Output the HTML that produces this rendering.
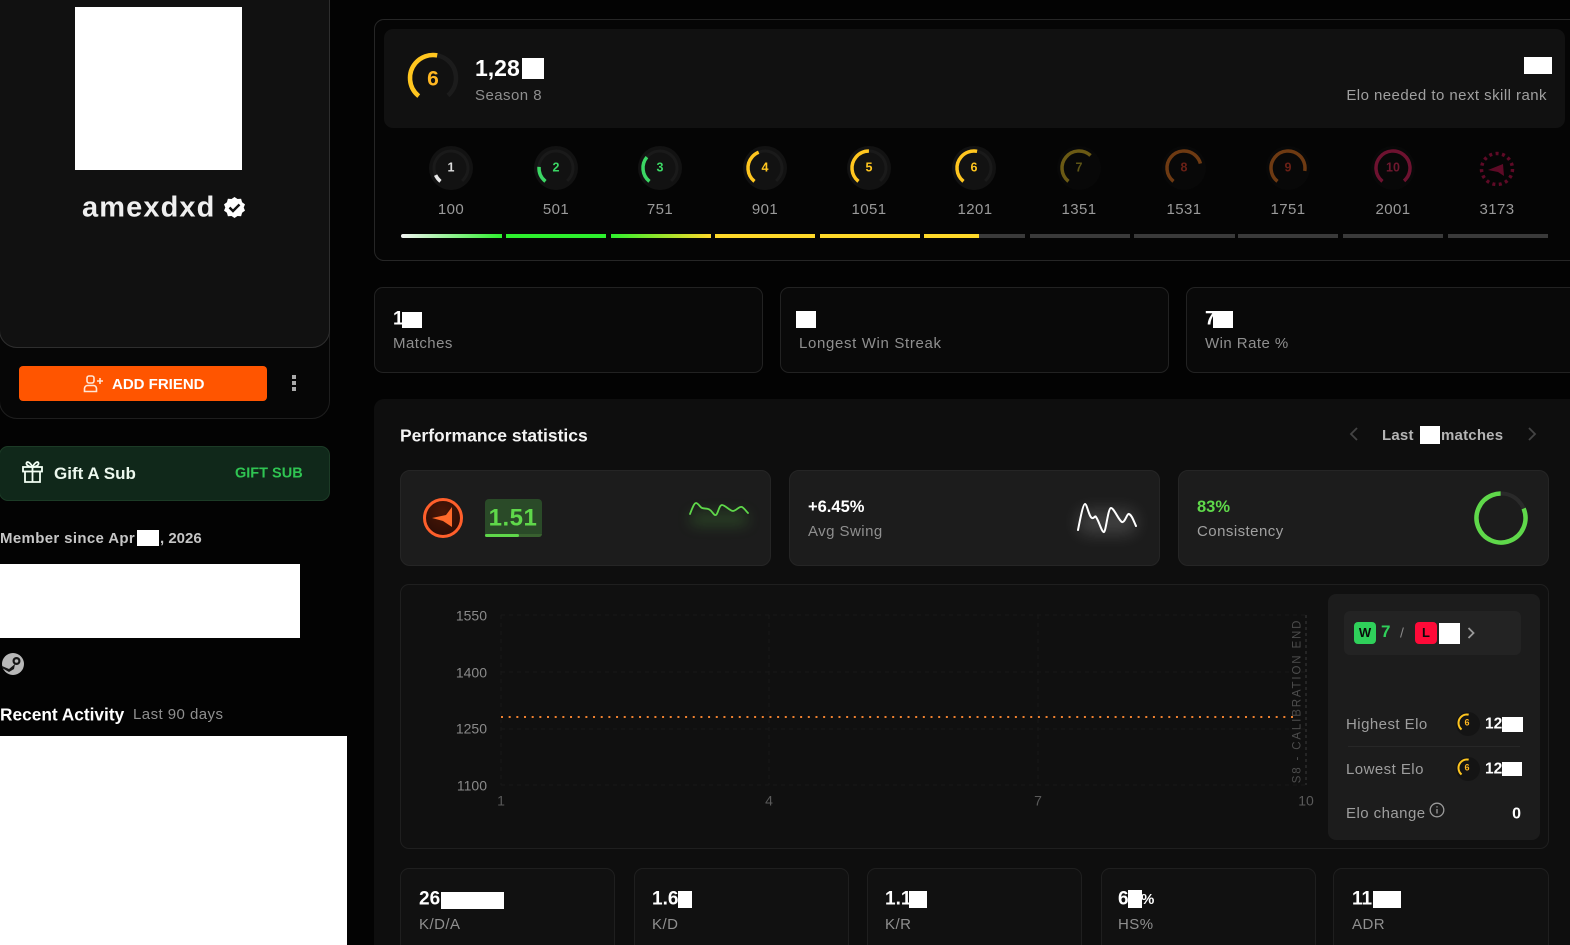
<!DOCTYPE html>
<html lang="en">
<head>
<meta charset="utf-8">
<title>amexdxd</title>
<style>
html,body{margin:0;padding:0;background:#030303;width:1570px;height:945px;overflow:hidden}
body{position:relative;font-family:"Liberation Sans",sans-serif;color:#fff}
div,svg,span{box-sizing:border-box}
.a{position:absolute}
.t{position:absolute;white-space:nowrap;transform:translateY(-50%);line-height:1.2;margin-top:2px}
.c{transform:translate(-50%,-50%);text-align:center}
.w{position:absolute;background:#fff}
.lbl{font-size:15px;color:#8f8f8f;letter-spacing:.45px}
.val{font-size:19px;font-weight:700;color:#fff;margin-top:1px}
.g{position:absolute;width:44px;height:44px;overflow:visible}
.num{font-size:15px;color:#9a9a9a;letter-spacing:.4px;margin-top:1px}
.bar{position:absolute;top:234px;height:4px;width:100px;background:#3a3a3a}
.gn{font-size:12.500px;font-weight:700;margin-top:0}
.stat{position:absolute;top:287px;height:86px;background:#090909;border:1px solid #222;border-radius:9px}
.card{position:absolute;top:470px;height:96px;width:371px;background:#1c1c1c;border:1px solid #252525;border-radius:10px}
.bot{position:absolute;top:868px;height:90px;width:215px;background:#111;border:1px solid #1f1f1f;border-radius:9px}
.ax{font-size:14px;color:#8a8a8a;margin-top:1px}
.axx{font-size:14px;color:#5a5a5a;margin-top:1px}
</style>
</head>
<body>

<!-- LEFT COLUMN -->
<div class="a" style="left:-1px;top:-20px;width:331px;height:439px;border:1px solid #1e1e1e;border-radius:0 0 18px 18px;background:#060606"></div>
<div class="a" style="left:-1px;top:-20px;width:331px;height:368px;background:#111;border:1px solid #2e2e2e;border-radius:0 0 18px 18px"></div>
<div class="w" style="left:75px;top:7px;width:167px;height:163px"></div>
<div class="t" style="left:82px;top:208px;margin-top:0;font-size:29px;font-weight:700;color:#efefef;letter-spacing:1.100px">amexdxd</div>
<svg class="a" style="left:224px;top:197px" width="21" height="21" viewBox="0 0 21 21"><path d="M10.5 0l3 2 3.600-.2 1 3.400 2.900 2.200-1.300 3.100 1.300 3.100-2.900 2.200-1 3.400-3.600-.2-3 2-3-2-3.600.2-1-3.400L0 13.600l1.300-3.100L0 7.400l2.900-2.200 1-3.400L7.500 2z" fill="#fff"/><path d="M5.500 10.500l3.500 3.500 6.500-6.500" fill="none" stroke="#111" stroke-width="2.400"/></svg>

<div class="a" style="left:19px;top:366px;width:248px;height:35px;background:#ff5500;border-radius:4px"></div>
<svg class="a" style="left:83px;top:375px" width="21" height="18" viewBox="0 0 21 18" fill="none" stroke="#ffe6d6" stroke-width="1.600"><rect x="4" y="1" width="7" height="7" rx="2"/><path d="M1.500 16.500v-3a3 3 0 0 1 3-3h6a3 3 0 0 1 3 3v3z"/><path d="M14 6h6M17 3v6"/></svg>
<div class="t" style="left:112px;top:383px;font-size:15px;font-weight:700;color:#fff">ADD FRIEND</div>
<div class="a" style="left:292px;top:375px;width:4px;height:4px;background:#aaa"></div>
<div class="a" style="left:292px;top:381px;width:4px;height:4px;background:#aaa"></div>
<div class="a" style="left:292px;top:387px;width:4px;height:4px;background:#aaa"></div>

<div class="a" style="left:-1px;top:446px;width:331px;height:55px;background:#10281a;border:1px solid #1c3b26;border-radius:9px"></div>
<svg class="a" style="left:22px;top:461px" width="21" height="22" viewBox="0 0 21 22" fill="none" stroke="#f2fff4" stroke-width="1.800"><rect x="1" y="6" width="19" height="4.500"/><path d="M3 10.500V21h15V10.500M10.500 6v15M10.500 6C8 1 5 0 4.500 2S7 6 10.500 6zM10.500 6c2.500-5 5.500-6 6-4s-2.500 4-6 4z"/></svg>
<div class="t" style="left:54px;top:472px;font-size:17px;font-weight:700;color:#ecf8ee">Gift A Sub</div>
<div class="t" style="left:235px;top:472px;font-size:14.500px;font-weight:700;color:#2fc452">GIFT SUB</div>

<div class="t" style="left:0;top:537px;font-size:15px;font-weight:700;color:#c6c6c6;letter-spacing:.35px">Member since Apr</div>
<div class="w" style="left:137px;top:530px;width:22px;height:16px"></div>
<div class="t" style="left:160px;top:537px;font-size:15px;font-weight:700;color:#c6c6c6">, 2026</div>
<div class="w" style="left:0;top:564px;width:300px;height:74px"></div>

<svg class="a" style="left:2px;top:653px" width="22" height="22" viewBox="0 0 22 22"><circle cx="11" cy="11" r="11" fill="#b8b8b8"/><circle cx="14.500" cy="8" r="4" fill="#161616"/><circle cx="14.500" cy="8" r="1.800" fill="#b8b8b8"/><path d="M0 13l7 3 6-5-1 5-5 3-7-4z" fill="#161616"/></svg>

<div class="t" style="left:0;top:713px;font-size:17.300px;font-weight:700;color:#fff">Recent Activity</div>
<div class="t lbl" style="left:133px;top:713px">Last 90 days</div>
<div class="w" style="left:0;top:736px;width:347px;height:209px"></div>

<!-- TOP CARD -->
<div class="a" style="left:374px;top:19px;width:1210px;height:242px;background:#050505;border:1px solid #262626;border-radius:10px"></div>
<div class="a" style="left:384px;top:29px;width:1181px;height:99px;background:#111;border-radius:9px"></div>

<svg class="a" style="left:406px;top:51px" width="54" height="54" viewBox="0 0 54 54" fill="none"><circle cx="27" cy="27" r="23" stroke="#1c1c1c" stroke-width="4.500" pathLength="100" stroke-dasharray="78 22" transform="rotate(130 27 27)"/><circle cx="27" cy="27" r="23" stroke="#ffc61f" stroke-width="4.500" pathLength="100" stroke-dasharray="42 58" transform="rotate(130 27 27)"/></svg>
<div class="t c" style="left:433px;top:79px;margin-top:0;font-size:21px;font-weight:700;color:#ffb722">6</div>
<div class="t" style="left:475px;top:68px;margin-top:1px;font-size:23px;font-weight:700;color:#fff">1,28</div>
<div class="w" style="left:522px;top:58px;width:22px;height:21px"></div>
<div class="t lbl" style="left:475px;top:94px">Season 8</div>
<div class="w" style="left:1524px;top:57px;width:28px;height:17px"></div>
<div class="t lbl" style="right:23px;top:94px;color:#a0a0a0">Elo needed to next skill rank</div>

<!-- Gauges -->
<svg class="g" style="left:429px;top:146px" viewBox="0 0 44 44" fill="none"><circle cx="22" cy="22" r="22" fill="#121212"/><circle cx="22" cy="22" r="17" stroke="#1a1a1a" stroke-width="3" pathLength="100" stroke-dasharray="78 22" transform="rotate(130 22 22)"/><circle cx="22" cy="22" r="17" stroke="#e8e8e8" stroke-width="3.500" pathLength="100" stroke-dasharray="7 93" transform="rotate(130 22 22)"/></svg>
<div class="t c gn" style="left:451px;top:168px;color:#ddd">1</div>
<svg class="g" style="left:534px;top:146px" viewBox="0 0 44 44" fill="none"><circle cx="22" cy="22" r="22" fill="#121212"/><circle cx="22" cy="22" r="17" stroke="#1a1a1a" stroke-width="3" pathLength="100" stroke-dasharray="78 22" transform="rotate(130 22 22)"/><circle cx="22" cy="22" r="17" stroke="#3bd764" stroke-width="3.500" pathLength="100" stroke-dasharray="15 85" transform="rotate(130 22 22)"/></svg>
<div class="t c gn" style="left:556px;top:168px;color:#3bd764">2</div>
<svg class="g" style="left:638px;top:146px" viewBox="0 0 44 44" fill="none"><circle cx="22" cy="22" r="22" fill="#121212"/><circle cx="22" cy="22" r="17" stroke="#1a1a1a" stroke-width="3" pathLength="100" stroke-dasharray="78 22" transform="rotate(130 22 22)"/><circle cx="22" cy="22" r="17" stroke="#3bd764" stroke-width="3.500" pathLength="100" stroke-dasharray="25 75" transform="rotate(130 22 22)"/></svg>
<div class="t c gn" style="left:660px;top:168px;color:#3bd764">3</div>
<svg class="g" style="left:743px;top:146px" viewBox="0 0 44 44" fill="none"><circle cx="22" cy="22" r="22" fill="#121212"/><circle cx="22" cy="22" r="17" stroke="#1a1a1a" stroke-width="3" pathLength="100" stroke-dasharray="78 22" transform="rotate(130 22 22)"/><circle cx="22" cy="22" r="17" stroke="#ffc61f" stroke-width="3.500" pathLength="100" stroke-dasharray="33 67" transform="rotate(130 22 22)"/></svg>
<div class="t c gn" style="left:765px;top:168px;color:#ffc61f">4</div>
<svg class="g" style="left:847px;top:146px" viewBox="0 0 44 44" fill="none"><circle cx="22" cy="22" r="22" fill="#121212"/><circle cx="22" cy="22" r="17" stroke="#1a1a1a" stroke-width="3" pathLength="100" stroke-dasharray="78 22" transform="rotate(130 22 22)"/><circle cx="22" cy="22" r="17" stroke="#ffc61f" stroke-width="3.500" pathLength="100" stroke-dasharray="39 61" transform="rotate(130 22 22)"/></svg>
<div class="t c gn" style="left:869px;top:168px;color:#ffc61f">5</div>
<svg class="g" style="left:952px;top:146px" viewBox="0 0 44 44" fill="none"><circle cx="22" cy="22" r="22" fill="#121212"/><circle cx="22" cy="22" r="17" stroke="#1a1a1a" stroke-width="3" pathLength="100" stroke-dasharray="78 22" transform="rotate(130 22 22)"/><circle cx="22" cy="22" r="17" stroke="#ffc61f" stroke-width="3.500" pathLength="100" stroke-dasharray="42 58" transform="rotate(130 22 22)"/></svg>
<div class="t c gn" style="left:974px;top:168px;color:#ffc61f">6</div>
<svg class="g" style="left:1057px;top:146px" viewBox="0 0 44 44" fill="none"><circle cx="22" cy="22" r="22" fill="#080808"/><circle cx="22" cy="22" r="17" stroke="#6b5a14" stroke-width="3.500" pathLength="100" stroke-dasharray="51 49" transform="rotate(130 22 22)"/></svg>
<div class="t c gn" style="left:1079px;top:168px;color:#5d5416">7</div>
<svg class="g" style="left:1162px;top:146px" viewBox="0 0 44 44" fill="none"><circle cx="22" cy="22" r="22" fill="#080808"/><circle cx="22" cy="22" r="17" stroke="#6e3a12" stroke-width="3.500" pathLength="100" stroke-dasharray="60 40" transform="rotate(130 22 22)"/></svg>
<div class="t c gn" style="left:1184px;top:168px;color:#6a2016">8</div>
<svg class="g" style="left:1266px;top:146px" viewBox="0 0 44 44" fill="none"><circle cx="22" cy="22" r="22" fill="#080808"/><circle cx="22" cy="22" r="17" stroke="#6e3a12" stroke-width="3.500" pathLength="100" stroke-dasharray="67 33" transform="rotate(130 22 22)"/></svg>
<div class="t c gn" style="left:1288px;top:168px;color:#6a2016">9</div>
<svg class="g" style="left:1371px;top:146px" viewBox="0 0 44 44" fill="none"><circle cx="22" cy="22" r="22" fill="#080808"/><circle cx="22" cy="22" r="17" stroke="#6e1230" stroke-width="3.500" pathLength="100" stroke-dasharray="78 22" transform="rotate(130 22 22)"/></svg>
<div class="t c gn" style="left:1393px;top:168px;color:#70182f">10</div>
<svg class="g" style="left:1475px;top:146px" viewBox="0 0 44 44" fill="none"><circle cx="22" cy="23" r="15.500" stroke="#5e0a26" stroke-width="3.500" stroke-dasharray="3 3.500"/><path d="M13 24l15-6 1 12-6-4z" fill="#5e0a26"/></svg>

<div class="t c num" style="left:451px;top:209px">100</div>
<div class="t c num" style="left:556px;top:209px">501</div>
<div class="t c num" style="left:660px;top:209px">751</div>
<div class="t c num" style="left:765px;top:209px">901</div>
<div class="t c num" style="left:869px;top:209px">1051</div>
<div class="t c num" style="left:975px;top:209px">1201</div>
<div class="t c num" style="left:1079px;top:209px">1351</div>
<div class="t c num" style="left:1184px;top:209px">1531</div>
<div class="t c num" style="left:1288px;top:209px">1751</div>
<div class="t c num" style="left:1393px;top:209px">2001</div>
<div class="t c num" style="left:1497px;top:209px">3173</div>

<div class="bar" style="left:401px;width:101px;border-radius:2px 0 0 2px;background:linear-gradient(90deg,#f4f4f4,#2ef02e)"></div>
<div class="bar" style="left:506px;width:100px;background:#2ef02e"></div>
<div class="bar" style="left:611px;background:linear-gradient(90deg,#2ef02e,#ffd92a)"></div>
<div class="bar" style="left:715px;background:#ffd92a"></div>
<div class="bar" style="left:820px;background:#ffd92a"></div>
<div class="bar" style="left:924px;width:101px"></div>
<div class="bar" style="left:924px;width:55px;background:#ffd92a"></div>
<div class="bar" style="left:1030px"></div>
<div class="bar" style="left:1134px;width:101px"></div>
<div class="bar" style="left:1238px"></div>
<div class="bar" style="left:1343px"></div>
<div class="bar" style="left:1448px"></div>

<!-- STATS ROW -->
<div class="stat" style="left:374px;width:389px"></div>
<div class="stat" style="left:780px;width:389px"></div>
<div class="stat" style="left:1186px;width:400px"></div>
<div class="t val" style="left:393px;top:319px">1</div>
<div class="w" style="left:402px;top:312px;width:20px;height:16px"></div>
<div class="t lbl" style="left:393px;top:342px">Matches</div>
<div class="w" style="left:796px;top:311px;width:20px;height:17px"></div>
<div class="t lbl" style="left:799px;top:342px;letter-spacing:.65px">Longest Win Streak</div>
<div class="t val" style="left:1205px;top:319px">7</div>
<div class="w" style="left:1213px;top:311px;width:20px;height:17px"></div>
<div class="t lbl" style="left:1205px;top:342px">Win Rate %</div>

<!-- PERFORMANCE PANEL -->
<div class="a" style="left:374px;top:399px;width:1210px;height:560px;background:#0e0e0e;border-radius:10px"></div>
<div class="t" style="left:400px;top:434px;font-size:17.500px;font-weight:700;color:#f2f2f2">Performance statistics</div>
<svg class="a" style="left:1349px;top:427px" width="10" height="14" viewBox="0 0 10 14" fill="none" stroke="#444" stroke-width="1.800"><path d="M8 1L2 7l6 6"/></svg>
<div class="t" style="left:1382px;top:434px;font-size:15px;font-weight:700;color:#b4b4b4;letter-spacing:.2px">Last</div>
<div class="w" style="left:1420px;top:426px;width:20px;height:18px"></div>
<div class="t" style="left:1441px;top:434px;font-size:15px;font-weight:700;color:#b4b4b4;letter-spacing:.2px">matches</div>
<svg class="a" style="left:1527px;top:427px" width="10" height="14" viewBox="0 0 10 14" fill="none" stroke="#444" stroke-width="1.800"><path d="M2 1l6 6-6 6"/></svg>

<!-- Card 1 -->
<div class="card" style="left:400px"></div>
<svg class="a" style="left:422px;top:497px" width="42" height="42" viewBox="0 0 42 42"><defs><radialGradient id="rg" cx=".5" cy=".35" r=".7"><stop offset="0" stop-color="#4a1707"/><stop offset="1" stop-color="#2a0c05"/></radialGradient></defs><circle cx="21" cy="21" r="18.500" fill="url(#rg)" stroke="#ff5f2b" stroke-width="3"/><path d="M10 21L24 18 30 10 30 30 21 24z" fill="#ff6a2b"/></svg>
<div class="a" style="left:485px;top:499px;width:57px;height:38px;background:#2a4a28;border-radius:4px"></div>
<div class="t c" style="left:513px;top:517px;font-size:24px;font-weight:700;color:#5fd84a;letter-spacing:.5px">1.51</div>
<div class="a" style="left:485px;top:534px;width:57px;height:3px;background:#38602f;border-radius:0 0 3px 3px"></div>
<div class="a" style="left:485px;top:534px;width:34px;height:3px;background:#5fd84a;border-radius:2px"></div>
<div class="a" style="left:690px;top:513px;width:58px;height:12px;background:rgba(95,216,74,.22);filter:blur(7px);border-radius:8px"></div>
<svg class="a" style="left:680px;top:495px" width="80" height="30" viewBox="680 495 80 30" fill="none" stroke="#5fd84a" stroke-width="1.800" stroke-linecap="round"><path d="M690 514C692 509 694 503 696 503C698 503 700 507 702 508C705 509 708 508 710 510C712 511 714 516 716 515C718 514 719 505 722 505C725 505 730 511 733 511C736 511 739 506 742 507C744 508 746 511 748 513"/></svg>

<!-- Card 2 -->
<div class="card" style="left:789px"></div>
<div class="t" style="left:808px;top:507px;margin-top:1px;font-size:16.500px;font-weight:700;color:#fff">+6.45%</div>
<div class="t lbl" style="left:808px;top:530px">Avg Swing</div>
<div class="a" style="left:1078px;top:510px;width:58px;height:24px;background:rgba(255,255,255,.16);filter:blur(8px);border-radius:10px"></div>
<svg class="a" style="left:1070px;top:498px" width="75" height="40" viewBox="1070 498 75 40" fill="none" stroke="#fff" stroke-width="2" stroke-linecap="round"><path d="M1078 530C1080 520 1083 504 1085 504C1087 504 1089 517 1092 518C1094 519 1095 515 1096 517C1099 521 1102 533 1104 532C1106 531 1108 508 1111 508C1114 508 1119 521 1122 522C1125 523 1127 513 1129 514C1132 515 1134 522 1136 526"/></svg>

<!-- Card 3 -->
<div class="card" style="left:1178px"></div>
<div class="t" style="left:1197px;top:507px;margin-top:1px;font-size:16.500px;font-weight:700;color:#5fd84a">83%</div>
<div class="t lbl" style="left:1197px;top:530px;color:#a0a0a0">Consistency</div>
<svg class="a" style="left:1473px;top:490px" width="56" height="56" viewBox="0 0 56 56" fill="none"><circle cx="28" cy="28" r="24.500" stroke="#2a2a2a" stroke-width="4"/><circle cx="28" cy="28" r="24.500" stroke="#5fd84a" stroke-width="4.500" pathLength="100" stroke-dasharray="81 19" transform="rotate(-21 28 28)"/></svg>

<!-- Chart -->
<div class="a" style="left:400px;top:584px;width:1149px;height:265px;background:#101010;border:1px solid #1f1f1f;border-radius:9px"></div>
<div class="t ax" style="right:1083px;top:615px">1550</div>
<div class="t ax" style="right:1083px;top:672px">1400</div>
<div class="t ax" style="right:1083px;top:728px">1250</div>
<div class="t ax" style="right:1083px;top:785px">1100</div>
<div class="t c axx" style="left:501px;top:800px">1</div>
<div class="t c axx" style="left:769px;top:800px">4</div>
<div class="t c axx" style="left:1038px;top:800px">7</div>
<div class="t c axx" style="left:1306px;top:800px">10</div>
<svg class="a" style="left:495px;top:610px" width="820" height="185" viewBox="495 610 820 185" fill="none">
<g stroke="#181818" stroke-width="1" stroke-dasharray="4 4"><path d="M501 615H1306M501 672H1306M501 729H1306M501 785H1306M501 615V785M769 615V785M1038 615V785"/></g>
<path d="M501 717H1298" stroke="#f0812f" stroke-width="2" stroke-dasharray="2 5.670"/>
<path d="M1306 615V785" stroke="#3a3a3a" stroke-width="1" stroke-dasharray="3 3"/>
</svg>
<div class="a" style="left:1298px;top:701px;font-size:11.500px;line-height:1;letter-spacing:1.850px;color:#4c4c4c;white-space:nowrap;transform:translate(-50%,-50%) rotate(-90deg)">S8 - CALIBRATION END</div>

<!-- Side panel -->
<div class="a" style="left:1328px;top:594px;width:212px;height:246px;background:#1c1c1c;border-radius:8px"></div>
<div class="a" style="left:1344px;top:611px;width:177px;height:44px;background:#232323;border-radius:6px"></div>
<div class="a" style="left:1354px;top:622px;width:22px;height:22px;background:#2fd05a;border-radius:4px"></div>
<div class="t c" style="left:1365px;top:633px;margin-top:0;font-size:13px;font-weight:700;color:#0a0a0a">W</div>
<div class="t" style="left:1381px;top:632px;margin-top:0;font-size:17px;font-weight:700;color:#2fd05a">7</div>
<div class="t" style="left:1400px;top:633px;margin-top:0;font-size:14px;color:#8a8a8a">/</div>
<div class="a" style="left:1415px;top:622px;width:22px;height:22px;background:#ff0a38;border-radius:4px"></div>
<div class="t c" style="left:1426px;top:633px;margin-top:0;font-size:13px;font-weight:700;color:#0a0a0a">L</div>
<div class="w" style="left:1439px;top:623px;width:21px;height:21px"></div>
<svg class="a" style="left:1467px;top:627px" width="9" height="12" viewBox="0 0 9 12" fill="none" stroke="#999" stroke-width="1.800"><path d="M1.500 1l5 5-5 5"/></svg>

<div class="t lbl" style="left:1346px;top:723px;color:#9e9e9e">Highest Elo</div>
<svg class="a" style="left:1456px;top:712px" width="24" height="24" viewBox="0 0 24 24" fill="none"><circle cx="12" cy="12" r="12" fill="#141414"/><circle cx="11" cy="11" r="8.500" stroke="#ffc61f" stroke-width="2" pathLength="100" stroke-dasharray="42 58" transform="rotate(130 11 11)"/></svg>
<div class="t c" style="left:1467px;top:723px;margin-top:0;font-size:9px;font-weight:700;color:#ffb722">6</div>
<div class="t" style="left:1485px;top:723px;font-size:15.500px;font-weight:700;color:#fff">12</div>
<div class="w" style="left:1502px;top:717px;width:21px;height:15px"></div>
<div class="a" style="left:1348px;top:746px;width:172px;height:1px;background:#272727"></div>
<div class="t lbl" style="left:1346px;top:768px;color:#9e9e9e">Lowest Elo</div>
<svg class="a" style="left:1456px;top:757px" width="24" height="24" viewBox="0 0 24 24" fill="none"><circle cx="12" cy="12" r="12" fill="#141414"/><circle cx="11" cy="11" r="8.500" stroke="#ffc61f" stroke-width="2" pathLength="100" stroke-dasharray="42 58" transform="rotate(130 11 11)"/></svg>
<div class="t c" style="left:1467px;top:768px;margin-top:0;font-size:9px;font-weight:700;color:#ffb722">6</div>
<div class="t" style="left:1485px;top:768px;font-size:15.500px;font-weight:700;color:#fff">12</div>
<div class="w" style="left:1502px;top:762px;width:20px;height:14px"></div>
<div class="t lbl" style="left:1346px;top:812px;color:#9e9e9e">Elo change</div>
<svg class="a" style="left:1429px;top:802px" width="16" height="16" viewBox="0 0 16 16" fill="none" stroke="#9a9a9a" stroke-width="1.300"><circle cx="8" cy="8" r="6.800"/><path d="M8 7v4.500M8 4.200v1.300"/></svg>
<div class="t" style="right:49px;top:812px;font-size:16px;font-weight:700;color:#fff">0</div>

<!-- Bottom cards -->
<div class="bot" style="left:400px"></div>
<div class="bot" style="left:634px"></div>
<div class="bot" style="left:867px"></div>
<div class="bot" style="left:1101px"></div>
<div class="bot" style="left:1333px;width:216px"></div>
<div class="t val" style="left:419px;top:899px">26</div>
<div class="w" style="left:441px;top:892px;width:63px;height:17px"></div>
<div class="t lbl" style="left:419px;top:923px">K/D/A</div>
<div class="t val" style="left:652px;top:899px">1.6</div>
<div class="w" style="left:678px;top:891px;width:14px;height:17px"></div>
<div class="t lbl" style="left:652px;top:923px">K/D</div>
<div class="t val" style="left:885px;top:899px">1.1</div>
<div class="w" style="left:909px;top:891px;width:18px;height:17px"></div>
<div class="t lbl" style="left:885px;top:923px">K/R</div>
<div class="t val" style="left:1118px;top:899px">6</div>
<div class="w" style="left:1128px;top:890px;width:14px;height:18px"></div>
<div class="t val" style="left:1141px;top:899px;font-size:15px">%</div>
<div class="t lbl" style="left:1118px;top:923px">HS%</div>
<div class="t val" style="left:1352px;top:899px">11</div>
<div class="w" style="left:1373px;top:891px;width:28px;height:17px"></div>
<div class="t lbl" style="left:1352px;top:923px">ADR</div>

</body>
</html>
